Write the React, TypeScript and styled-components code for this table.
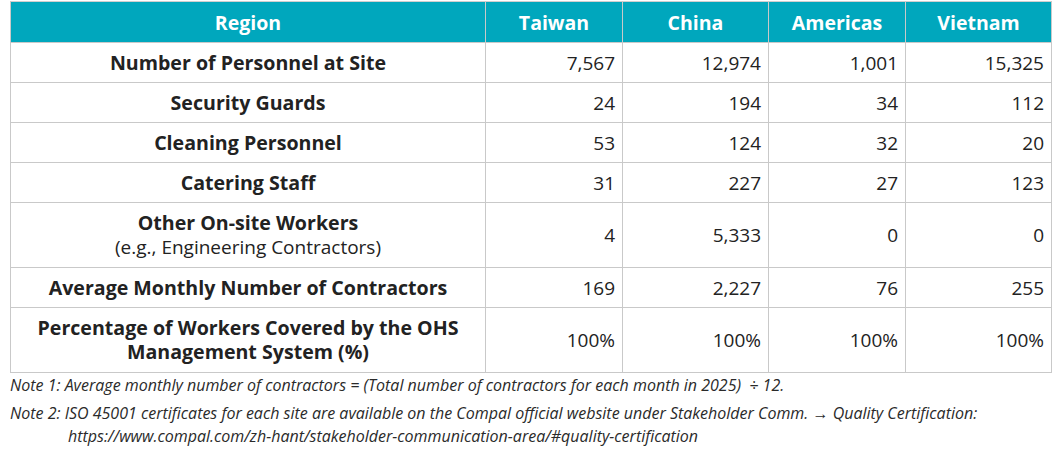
import styled, { createGlobalStyle } from "styled-components";

const GlobalStyle = createGlobalStyle`
    body {
        margin: 0;
        background: #ffffff;
        font-family: "Open Sans", "Noto Sans", sans-serif;
        color: #222222;
    }
`;

type Row = {
    label: string;
    sub?: string;
    values: string[];
    tall?: boolean;
};

const regions = ["Taiwan", "China", "Americas", "Vietnam"];

const rows: Row[] = [
    { label: "Number of Personnel at Site", values: ["7,567", "12,974", "1,001", "15,325"] },
    { label: "Security Guards", values: ["24", "194", "34", "112"] },
    { label: "Cleaning Personnel", values: ["53", "124", "32", "20"] },
    { label: "Catering Staff", values: ["31", "227", "27", "123"] },
    {
        label: "Other On-site Workers",
        sub: "(e.g., Engineering Contractors)",
        values: ["4", "5,333", "0", "0"],
        tall: true,
    },
    { label: "Average Monthly Number of Contractors", values: ["169", "2,227", "76", "255"] },
    {
        label: "Percentage of Workers Covered by the OHS Management System (%)",
        values: ["100%", "100%", "100%", "100%"],
        tall: true,
    },
];

const Page = styled.div`
    padding: 1px 3px 0 10px;
    width: 1054px;
    box-sizing: border-box;
`;

const Table = styled.table`
    width: 1041px;
    border-collapse: collapse;
    table-layout: fixed;
    border: 1px solid #cfcfcf;
`;

const HeadCell = styled.th`
    height: 40px;
    padding: 0;
    background: #00a7bd;
    color: #ffffff;
    font-size: 19.5px;
    font-weight: 700;
    text-align: center;
    border: 1px solid #c9c9c9;
    border-top: none;
`;

const BodyRow = styled.tr<{ $tall?: boolean }>`
    height: ${(p) => (p.$tall ? "65px" : "40px")};
`;

const LabelCell = styled.td`
    padding: 0 20px;
    text-align: center;
    font-size: 19.6px;
    font-weight: 700;
    line-height: 24px;
    border: 1px solid #c9c9c9;
`;

const SubLabel = styled.div`
    font-weight: 400;
    font-size: 19px;
`;

const NumberCell = styled.td`
    padding: 0 7px 0 0;
    text-align: right;
    font-size: 19px;
    font-weight: 400;
    border: 1px solid #c9c9c9;
`;

const Notes = styled.div`
    padding-top: 1px;
    font-size: 16px;
    font-style: italic;
    color: #2a2a2a;
    line-height: 23px;
`;

const Note = styled.p`
    margin: 0 0 5px;
    padding-left: 58px;
    text-indent: -58px;
`;

export default function App() {
    return (
        <Page>
            <GlobalStyle />
            <Table>
                <colgroup>
                    <col style={{ width: 475 }} />
                    <col style={{ width: 137 }} />
                    <col style={{ width: 146 }} />
                    <col style={{ width: 137 }} />
                    <col style={{ width: 146 }} />
                </colgroup>
                <thead>
                    <tr>
                        <HeadCell>Region</HeadCell>
                        {regions.map((r) => (
                            <HeadCell key={r}>{r}</HeadCell>
                        ))}
                    </tr>
                </thead>
                <tbody>
                    {rows.map((row) => (
                        <BodyRow key={row.label} $tall={row.tall}>
                            <LabelCell>
                                {row.label}
                                {row.sub && <SubLabel>{row.sub}</SubLabel>}
                            </LabelCell>
                            {row.values.map((v, i) => (
                                <NumberCell key={i}>{v}</NumberCell>
                            ))}
                        </BodyRow>
                    ))}
                </tbody>
            </Table>
            <Notes>
                <Note>
                    Note 1: Average monthly number of contractors = (Total number of contractors for each month in 2025)&nbsp; ÷ 12.
                </Note>
                <Note>
                    Note 2: ISO 45001 certificates for each site are available on the Compal official website under Stakeholder Comm. → Quality Certification:
                    <br />
                    https://www.compal.com/zh-hant/stakeholder-communication-area/#quality-certification
                </Note>
            </Notes>
        </Page>
    );
}
